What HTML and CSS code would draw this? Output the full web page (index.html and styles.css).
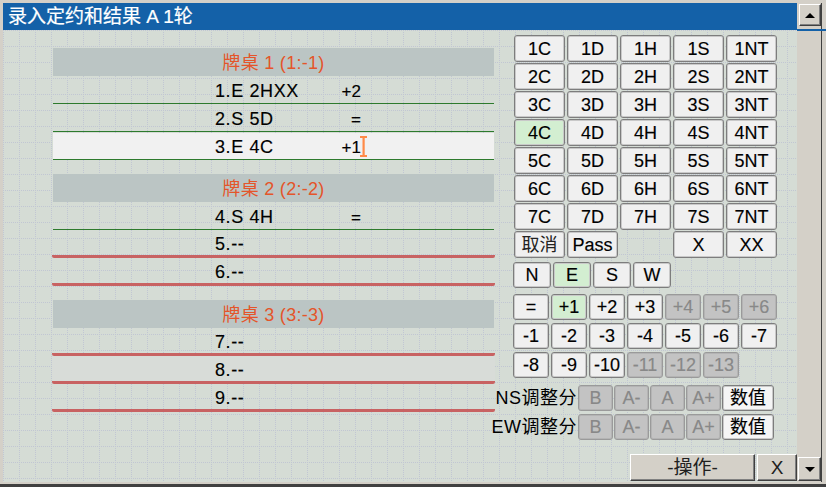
FILE: index.html
```html
<!DOCTYPE html>
<html lang="zh">
<head>
<meta charset="utf-8">
<title>录入定约和结果</title>
<link rel="stylesheet" href="styles.css">
</head>
<body>
<div class="win">
  <div class="main">
    <div class="titlebar">录入定约和结果 A 1轮</div>
    <div class="content">
      <div class="cols">
        <div class="left">
          <div class="thead">牌桌 1 (1:-1)</div>
          <div class="row"><span class="c">1.E 2HXX</span><span class="r">+2</span></div>
          <div class="row"><span class="c">2.S 5D</span><span class="r">=</span></div>
          <div class="row sel"><span class="c">3.E 4C</span><span class="r">+1<svg class="ibeam" width="7" height="21" viewBox="0 0 7 21"><rect x="0" y="0" width="7" height="2" fill="#ff8a48"/><rect x="2.5" y="0" width="2.2" height="21" fill="#ff8a48"/><rect x="0" y="19" width="7" height="2" fill="#ff8a48"/></svg></span></div>

          <div class="thead gap">牌桌 2 (2:-2)</div>
          <div class="row"><span class="c">4.S 4H</span><span class="r">=</span></div>
          <div class="row empty"><span class="c">5.--</span></div>
          <div class="row empty"><span class="c">6.--</span></div>

          <div class="thead gap">牌桌 3 (3:-3)</div>
          <div class="row empty"><span class="c">7.--</span></div>
          <div class="row empty hover"><span class="c">8.--</span></div>
          <div class="row empty"><span class="c">9.--</span></div>
        </div>

        <div class="right">
          <div class="bids">
            <div class="btn">1C</div><div class="btn">1D</div><div class="btn">1H</div><div class="btn">1S</div><div class="btn">1NT</div>
            <div class="btn">2C</div><div class="btn">2D</div><div class="btn">2H</div><div class="btn">2S</div><div class="btn">2NT</div>
            <div class="btn">3C</div><div class="btn">3D</div><div class="btn">3H</div><div class="btn">3S</div><div class="btn">3NT</div>
            <div class="btn on">4C</div><div class="btn">4D</div><div class="btn">4H</div><div class="btn">4S</div><div class="btn">4NT</div>
            <div class="btn">5C</div><div class="btn">5D</div><div class="btn">5H</div><div class="btn">5S</div><div class="btn">5NT</div>
            <div class="btn">6C</div><div class="btn">6D</div><div class="btn">6H</div><div class="btn">6S</div><div class="btn">6NT</div>
            <div class="btn">7C</div><div class="btn">7D</div><div class="btn">7H</div><div class="btn">7S</div><div class="btn">7NT</div>
            <div class="btn cjk">取消</div><div class="btn">Pass</div><div></div><div class="btn">X</div><div class="btn">XX</div>
          </div>

          <div class="seats">
            <div class="btn">N</div><div class="btn on">E</div><div class="btn">S</div><div class="btn">W</div>
          </div>

          <div class="results">
            <div class="btn">=</div><div class="btn on">+1</div><div class="btn">+2</div><div class="btn">+3</div><div class="btn dis">+4</div><div class="btn dis">+5</div><div class="btn dis">+6</div>
            <div class="btn">-1</div><div class="btn">-2</div><div class="btn">-3</div><div class="btn">-4</div><div class="btn">-5</div><div class="btn">-6</div><div class="btn">-7</div>
            <div class="btn">-8</div><div class="btn">-9</div><div class="btn">-10</div><div class="btn dis">-11</div><div class="btn dis">-12</div><div class="btn dis">-13</div>
          </div>

          <div class="adj">
            <div class="adjrow">
              <div class="lbl">NS调整分</div>
              <div class="btn dis">B</div><div class="btn dis">A-</div><div class="btn dis">A</div><div class="btn dis">A+</div><div class="btn val">数值</div>
            </div>
            <div class="adjrow">
              <div class="lbl">EW调整分</div>
              <div class="btn dis">B</div><div class="btn dis">A-</div><div class="btn dis">A</div><div class="btn dis">A+</div><div class="btn val">数值</div>
            </div>
          </div>
        </div>
      </div>

      <div class="bottombar">
        <div class="wbtn op">-操作-</div>
        <div class="wbtn close">X</div>
      </div>
    </div>
  </div>

  <div class="vscroll">
    <div class="sbtn up"><span class="tri-up"></span></div>
    <div class="blueline"></div>
    <div class="track"></div>
    <div class="sbtn down"><span class="tri-down"></span></div>
  </div>
</div>
</body>
</html>
```

FILE: styles.css
```css
* {
  box-sizing: border-box;
}

html, body {
  margin: 0;
  padding: 0;
}

body {
  background: #d4d0c8;
  font-family: "Liberation Sans", "Noto Sans CJK SC", sans-serif;
  color: #000;
  overflow: hidden;
}

.win {
  width: 826px;
  height: 487px;
  display: flex;
  padding: 3px 4px 2px 3px;
  border-bottom: 3px solid #404040;
}

.main {
  width: 794px;
  display: flex;
  flex-direction: column;
}

.titlebar {
  height: 27px;
  background: #1461a8;
  color: #fff;
  font-size: 19px;
  line-height: 27px;
  padding-left: 5px;
  white-space: nowrap;
  -webkit-text-stroke: 0.2px #fff;
}

.content {
  flex: 1;
  display: flex;
  flex-direction: column;
  padding-top: 5px;
  background-color: #d5dcd5;
  background-image:
    repeating-linear-gradient(90deg, transparent 0 1px, #d5dcd5 1px 2px),
    repeating-linear-gradient(180deg, transparent 0 1px, #d5dcd5 1px 2px),
    linear-gradient(90deg, #c1c6d3 1px, transparent 1px),
    linear-gradient(180deg, #c1c6d3 1px, transparent 1px);
  background-size: auto, auto, 16px 16px, 16px 16px;
}

.cols {
  display: flex;
  padding-left: 50px;
}

/* ---------- left list ---------- */
.left {
  width: 441px;
  margin-top: 13px;
  font-size: 18px;
}

.thead {
  height: 28px;
  background: #bbc5c4;
  color: #e4552a;
  text-align: center;
  padding-top: 3px;
  line-height: 25px;
  white-space: nowrap;
  letter-spacing: 0.3px;
}

.thead.gap {
  margin-top: 14px;
}

.row {
  height: 28px;
  padding-top: 3px;
  padding-left: 162px;
  line-height: 24px;
  border-bottom: 1px solid #2d7a2d;
  white-space: nowrap;
  -webkit-text-stroke: 0.15px #000;
}

.row.sel {
  background: linear-gradient(180deg, transparent 1px, #f1f1f1 1px);
}

.row.empty {
  border-bottom: 3px solid #c86262;
  margin: 0 -1px;
  padding-left: 163px;
  line-height: 22px;
  border-radius: 0 0 2px 2px;
}

.row.hover {
  background: #d8dcd8;
}

.c {
  display: inline-block;
  width: 100px;
  letter-spacing: 0.6px;
}

.r {
  display: inline-block;
  width: 46px;
  text-align: right;
  position: relative;
  font-size: 17px;
}

.ibeam {
  position: absolute;
  right: -6px;
  top: 0px;
}

/* ---------- right buttons ---------- */
.right {
  width: 264px;
  margin-left: 19px;
  font-size: 18px;
}

.btn {
  display: flex;
  align-items: center;
  justify-content: center;
  background: #f0f0f0;
  border: 1px solid #7d7d7d;
  box-shadow: inset 0 0 0 1px #c9c9c9;
  border-radius: 3px;
  white-space: nowrap;
  line-height: 1;
  -webkit-text-stroke: 0.15px currentColor;
}

.btn.on {
  background: #d3eed1;
}

.btn.dis {
  background: #c3c3c3;
  color: #888;
  border-color: #9a9a9a;
  box-shadow: inset 0 0 0 1px #b4b4b4;
}

.btn.val {
  background: #f5f5f5;
}

.btn.cjk {
  color: #222;
  -webkit-text-stroke: 0;
}

.bids {
  display: grid;
  grid-template-columns: repeat(5, 51px);
  grid-auto-rows: 27px;
  column-gap: 2px;
  row-gap: 1px;
  margin-left: 1px;
}

.seats {
  display: flex;
  gap: 2px;
  margin-top: 4px;
}

.seats .btn {
  width: 38px;
  height: 26px;
}

.results {
  display: grid;
  grid-template-columns: repeat(7, 36px);
  grid-auto-rows: 26px;
  column-gap: 2px;
  row-gap: 3px;
  margin-top: 6px;
}

.adj {
  margin-top: 7px;
  margin-left: -35px;
  display: flex;
  flex-direction: column;
  gap: 3px;
}

.adjrow {
  display: flex;
  height: 26px;
  gap: 1px;
}

.adjrow .lbl {
  width: 99px;
  text-align: right;
  font-size: 18px;
  line-height: 26px;
  white-space: nowrap;
  letter-spacing: 0.5px;
}

.adjrow .btn {
  width: 35px;
}

.adjrow .btn.val {
  width: 52px;
}

/* ---------- bottom bar ---------- */
.bottombar {
  margin-top: auto;
  align-self: flex-end;
  display: flex;
  gap: 2px;
  margin-bottom: 1px;
}

.wbtn {
  height: 27px;
  background: #d4d0c8;
  border: 1px solid;
  border-color: #ffffff #404040 #404040 #ffffff;
  box-shadow: inset -1px -1px 0 #808080;
  font-size: 19px;
  line-height: 25px;
  text-align: center;
  color: #202020;
}

.wbtn.op {
  width: 125px;
}

.wbtn.close {
  width: 40px;
}

/* ---------- scrollbar ---------- */
.vscroll {
  width: 25px;
  display: flex;
  flex-direction: column;
  background: #d4d0c8;
  border-right: 1px solid #404040;
}

.sbtn {
  display: flex;
  align-items: center;
  justify-content: center;
  background: #d4d0c8;
  border: 1px solid;
  border-color: #ffffff #404040 #404040 #ffffff;
  box-shadow: inset -1px -1px 0 #808080;
}

.sbtn.up {
  width: 22px;
  height: 22px;
  margin: 1px 0 0 2px;
}

.sbtn.down {
  width: 23px;
  height: 24px;
  margin: 0 0 1px 1px;
}

.tri-up {
  width: 0;
  height: 0;
  border-left: 5px solid transparent;
  border-right: 5px solid transparent;
  border-bottom: 5px solid #000;
}

.tri-down {
  width: 0;
  height: 0;
  border-left: 5px solid transparent;
  border-right: 5px solid transparent;
  border-top: 5px solid #000;
}

.blueline {
  height: 2px;
  margin-top: 3px;
  margin-right: -5px;
  background: #1461a8;
}

.track {
  flex: 1;
}
```
